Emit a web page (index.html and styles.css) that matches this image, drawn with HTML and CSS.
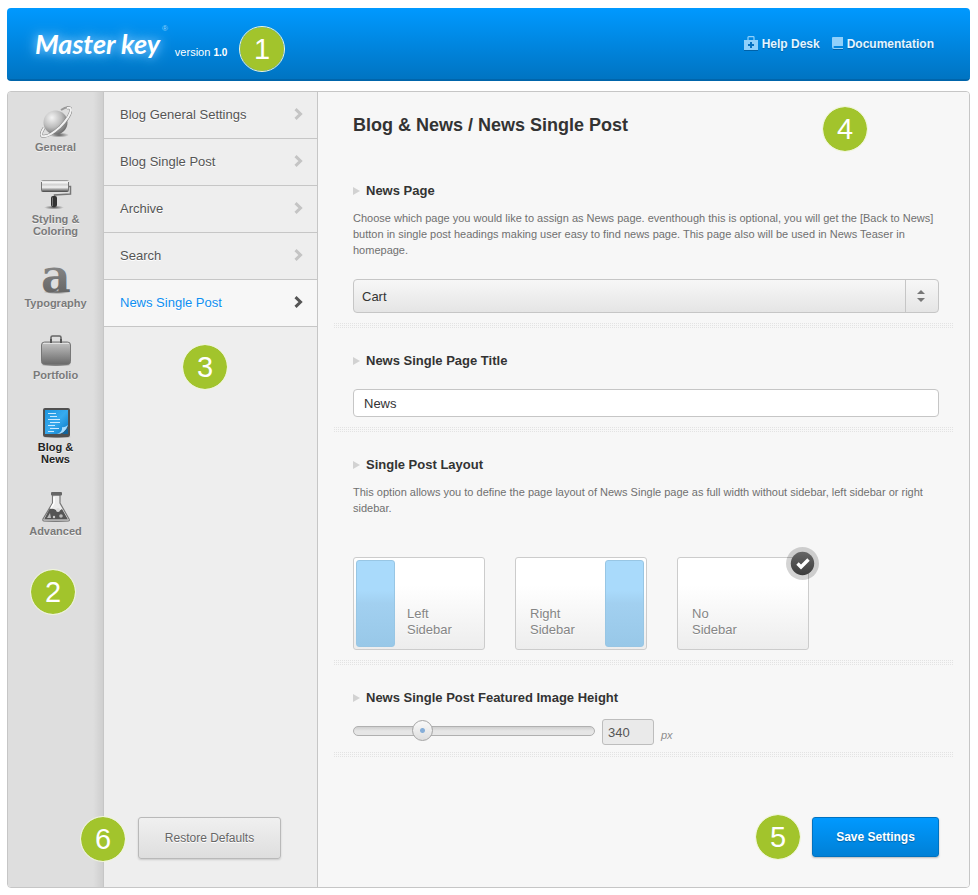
FILE: index.html
```html
<!DOCTYPE html>
<html lang="en">
<head>
<meta charset="utf-8">
<title>Master key – News Single Post</title>
<link rel="stylesheet" href="styles.css">
</head>
<body>
<header class="topbar">
  <span class="logo">Master key</span><sup class="reg">®</sup>
  <span class="version">version <b>1.0</b></span>
  <span class="callout callout-1">1</span>
  <nav class="links">
    <a href="#"><svg width="14" height="15" viewBox="0 0 14 15"><path d="M4 4V1.500Q4 .7 4.800 .7H9.200Q10 .7 10 1.500V4" fill="none" stroke="#8fd0fb" stroke-width="1.200"/><path d="M0 4h14v10H0z" fill="#8fd0fb"/><path d="M0 14h14v1H0z" fill="#0062a8"/><path d="M6 6h2v2h2v2H8v2H6v-2H4V8h2z" fill="#0671c0"/></svg>Help Desk</a>
    <a href="#"><svg width="11" height="13" viewBox="0 0 11 13"><path d="M1 0H11V9H2.500Q1.500 9 1.500 10T2.500 11H11V12H2Q0 12 0 10V1Q0 0 1 0z" fill="#8fd0fb"/><path d="M1 12h10v1H1z" fill="#0062a8"/></svg>Documentation</a>
  </nav>
</header>

<div class="panel">
  <nav class="rail">
    <a href="#"><svg width="32" height="32" viewBox="0 0 32 32">
      <defs>
        <radialGradient id="ball" cx=".35" cy=".3" r=".8"><stop offset="0" stop-color="#f4f4f4"/><stop offset=".5" stop-color="#bdbdbd"/><stop offset="1" stop-color="#5e5e5e"/></radialGradient>
        <linearGradient id="metal" x2="0" y2="1"><stop offset="0" stop-color="#c4c4c4"/><stop offset="1" stop-color="#696969"/></linearGradient>
        <radialGradient id="drop"><stop offset="0" stop-color="#000" stop-opacity=".6"/><stop offset="1" stop-color="#000" stop-opacity="0"/></radialGradient>
      </defs>
      <ellipse cx="19" cy="29" rx="10" ry="2.500" fill="url(#drop)"/>
      <path d="M21 4Q27 0 30 2" fill="none" stroke="#999" stroke-width="2"/>
      <circle cx="15.500" cy="16.500" r="12" fill="url(#ball)"/>
      <path d="M4 22Q0 28 2 30Q8 32 20 21Q30 11 31 4Q31 1 27 2" fill="none" stroke="#808080" stroke-width="3"/>
      <path d="M4 22Q0 28 2 30Q8 32 20 21Q30 11 31 4Q31 1 27 2" fill="none" stroke="#f1f1f1" stroke-width="2"/>
    </svg>General</a>
    <a href="#"><svg width="32" height="32" viewBox="0 0 32 32">
      <defs><linearGradient id="roll" x2="0" y2="1"><stop offset="0" stop-color="#777"/><stop offset=".15" stop-color="#fff"/><stop offset=".4" stop-color="#d0d0d0"/><stop offset=".6" stop-color="#f5f5f5"/><stop offset=".8" stop-color="#999"/><stop offset="1" stop-color="#444"/></linearGradient></defs>
      <ellipse cx="14" cy="29.500" rx="10" ry="2" fill="url(#drop)"/>
      <path d="M28 8.500H30.500V16L14.500 17V20" fill="none" stroke="#777" stroke-width="1.500"/>
      <rect x="1" y="2" width="28" height="12" rx="2" fill="url(#roll)"/>
      <path d="M1.500 4V12M28.500 4V12" stroke="#777"/>
      <rect x="11" y="18" width="6" height="11" rx="2" fill="#333"/><path d="M12.500 19.500V28" stroke="#777"/>
    </svg>Styling &amp;<br>Coloring</a>
    <a href="#"><svg class="type-icon" width="32" height="32" viewBox="0 0 32 32">
      <defs><linearGradient id="ink" x2="0" y2="1"><stop offset="0" stop-color="#999"/><stop offset="1" stop-color="#5a5a5a"/></linearGradient></defs>
      <ellipse cx="17" cy="30" rx="14" ry="2" fill="url(#drop)"/>
      <text x="1" y="30" class="type-glyph" fill="url(#ink)">a</text>
    </svg>Typography</a>
    <a href="#"><svg width="32" height="32" viewBox="0 0 32 32">
      <ellipse cx="16" cy="31" rx="16" ry="1.500" fill="url(#drop)"/>
      <path d="M11 8V3.500Q11 2 12.500 2H19.500Q21 2 21 3.500V8" fill="none" stroke="#666" stroke-width="1.600"/>
      <rect x="1.500" y="8" width="29" height="22.500" rx="3" fill="url(#metal)" stroke="#777"/>
      <path d="M3 9.500H29" stroke="#e0e0e0"/><path d="M11 5v4M21 5v4" stroke="#555" stroke-width="2"/>
    </svg>Portfolio</a>
    <a href="#" class="current"><svg width="32" height="32" viewBox="0 0 32 32">
      <defs><linearGradient id="page" x2="1" y2="1"><stop offset="0" stop-color="#1d96df"/><stop offset=".5" stop-color="#37aaee"/><stop offset="1" stop-color="#0878c4"/></linearGradient></defs>
      <ellipse cx="17" cy="31" rx="15" ry="1.500" fill="url(#drop)"/>
      <rect x="3" y="2" width="27" height="29" rx="2" fill="#505050"/>
      <path d="M5 4H28V20Q25 27 18 28H5z" fill="url(#page)"/>
      <path d="M28 19Q24 22 22 21Q23 26 17 28Q25 28 28 19" fill="#a7dcff"/><path d="M22 28L28 22V28z" fill="#10659f"/>
      <path d="M8 7.500h8M10 10.500h7M8 13.500h12M10 16.500h10M8 19.500h7M10 22.500h9M8 25.500h6" stroke="#cdeaff" stroke-width="1.200"/>
    </svg>Blog &amp;<br>News</a>
    <a href="#"><svg width="32" height="32" viewBox="0 0 32 32">
      <ellipse cx="16" cy="31" rx="15" ry="1.500" fill="url(#drop)"/>
      <path d="M12.500 5V13L3 29Q2.500 31 4 31H28Q30 31 29 29L20 13V5z" fill="#ececec" stroke="#777" stroke-width="1.200"/>
      <path d="M9.500 19L4 29.500H28L22 19Q19 22 16 20T9.500 19z" fill="#555"/>
      <path d="M10 23L7 28h4z" fill="#bbb"/><circle cx="18" cy="20" r="2" fill="#ddd"/><circle cx="21" cy="26" r="1.800" fill="#bbb"/><circle cx="14" cy="27" r="1.200" fill="#ccc"/>
      <rect x="11" y="2" width="11" height="3.500" rx="1" fill="#666"/><path d="M14 7V13L11 18" fill="none" stroke="#fff" stroke-width="1.500"/>
    </svg>Advanced</a>
    <span class="callout callout-2">2</span>
  </nav>

  <div class="subnav">
    <nav class="subnav-list">
      <a href="#">Blog General Settings<svg width="9" height="12" viewBox="0 0 9 12"><path d="M1.500 1.200L6.500 6L1.500 10.800"/></svg></a>
      <a href="#">Blog Single Post<svg width="9" height="12" viewBox="0 0 9 12"><path d="M1.500 1.200L6.500 6L1.500 10.800"/></svg></a>
      <a href="#">Archive<svg width="9" height="12" viewBox="0 0 9 12"><path d="M1.500 1.200L6.500 6L1.500 10.800"/></svg></a>
      <a href="#">Search<svg width="9" height="12" viewBox="0 0 9 12"><path d="M1.500 1.200L6.500 6L1.500 10.800"/></svg></a>
      <a href="#" class="current">News Single Post<svg width="9" height="12" viewBox="0 0 9 12"><path d="M1.500 1.200L6.500 6L1.500 10.800"/></svg></a>
    </nav>
    <button type="reset" form="settings" class="btn-restore">Restore Defaults</button>
    <span class="callout callout-3">3</span>
    <span class="callout callout-6">6</span>
  </div>

  <main class="main">
    <form id="settings" class="settings">
      <h1>Blog &amp; News / News Single Post</h1>

      <section class="option">
        <h2><label for="news-page">News Page</label></h2>
        <p>Choose which page you would like to assign as News page. eventhough this is optional, you will get the [Back to News] button in single post headings making user easy to find news page. This page also will be used in News Teaser in homepage.</p>
        <div class="select">
          <select id="news-page"><option>Cart</option></select>
          <span class="select-arrows"><svg width="8" height="12" viewBox="0 0 8 12"><path d="M4 0L8 4H0zM4 12L0 8H8z" fill="#777"/></svg></span>
        </div>
      </section>

      <section class="option">
        <h2><label for="page-title">News Single Page Title</label></h2>
        <input id="page-title" class="text" type="text" value="News">
      </section>

      <section class="option">
        <h2>Single Post Layout</h2>
        <p>This option allows you to define the page layout of News Single page as full width without sidebar, left sidebar or right sidebar.</p>
        <div class="cards">
          <label class="card"><input type="radio" name="layout"><span class="bar"></span><span class="name">Left<br>Sidebar</span></label>
          <label class="card card-right"><input type="radio" name="layout"><span class="name">Right<br>Sidebar</span><span class="bar"></span></label>
          <label class="card"><input type="radio" name="layout" checked><span class="name">No<br>Sidebar</span>
            <svg class="check" width="33" height="33" viewBox="0 0 33 33"><defs><linearGradient id="dark" x2="0" y2="1"><stop offset="0" stop-color="#666"/><stop offset="1" stop-color="#3c3c3c"/></linearGradient></defs><circle cx="16.500" cy="16.500" r="16.500" fill="#000" fill-opacity=".17"/><circle cx="16.500" cy="16.500" r="11.700" fill="url(#dark)"/><path d="M11.500 16.500L15 20L22.500 12.500" fill="none" stroke="#fff" stroke-width="3.400"/></svg></label>
        </div>
      </section>

      <section class="option option-range">
        <h2><label for="height">News Single Post Featured Image Height</label></h2>
        <div class="range">
          <input id="height" class="slider" type="range" min="100" max="1000" value="340">
          <input class="number" type="text" value="340" aria-label="Height in pixels">
          <span class="unit">px</span>
        </div>
      </section>

      <button type="submit" class="btn-save">Save Settings</button>
    </form>
    <span class="callout callout-4">4</span>
    <span class="callout callout-5">5</span>
  </main>
</div>
</body>
</html>
```
FILE: styles.css
```css
* { box-sizing: border-box; }

body {
  margin: 8px 8px 7px 7px;
  background: #fff;
  font-family: "Liberation Sans", Arial, sans-serif;
  font-size: 13px;
  color: #333;
}

a { text-decoration: none; }
h1, h2, p { margin: 0; }
input, select, button { font: inherit; margin: 0; }

/* Header */
.topbar {
  position: relative;
  display: flex;
  align-items: center;
  height: 73px;
  padding: 0 36px 0 28px;
  border-radius: 4px;
  border-bottom: 2px solid #0065ab;
  background: linear-gradient(#0099ff, #0074c2);
  color: #fff;
}
.logo {
  font-family: Lato, "Liberation Sans", sans-serif;
  font-style: italic;
  font-weight: bold;
  font-size: 27px;
  line-height: 40px;
  text-shadow: 0 0 14px #8fd0ff, 0 0 8px #4db2f7;
}
.reg { align-self: flex-start; margin: 16px 0 0 2px; font-size: 8px; color: #8fd0fb; }
.version { margin: 16px 0 0 7px; font-size: 11px; }
.version b { font-size: 10px; }
.links { display: flex; gap: 12px; margin-left: auto; }
.links a {
  display: flex;
  align-items: center;
  gap: 4px;
  color: #e4f4ff;
  font-weight: bold;
  font-size: 12px;
  text-shadow: 0 1px 1px #0063a8;
}

/* Numbered markers */
.callout {
  position: absolute;
  z-index: 2;
  width: 46px;
  height: 46px;
  border: 1px solid #f0f6d8;
  border-radius: 50%;
  background: #a2c42c;
  background-clip: padding-box;
  color: #fff;
  font-size: 29px;
  line-height: 44px;
  text-align: center;
}
.callout-1 { left: 232px; top: 18px; }
.callout-2 { left: 22px; top: 477px; }
.callout-3 { left: 78px; top: 252px; }
.callout-4 { right: 101px; top: 14px; }
.callout-5 { right: 168px; bottom: 27px; }
.callout-6 { left: -24px; bottom: 25px; }

/* Panel */
.panel {
  display: grid;
  grid-template-columns: 96px 214px 1fr;
  min-height: calc(100vh - 98px);
  margin-top: 10px;
  border: 1px solid #c6c6c6;
  border-radius: 4px;
  background: #f6f6f6;
}

.rail {
  position: relative;
  display: flex;
  flex-direction: column;
  gap: 25px;
  padding-top: 14px;
  border-right: 1px solid #c6c6c6;
  border-radius: 3px 0 0 3px;
  background: linear-gradient(to left, rgba(0, 0, 0, 0.07), rgba(0, 0, 0, 0) 10px), #dedede;
}
.rail a {
  display: flex;
  flex-direction: column;
  align-items: center;
  gap: 3px;
  color: #7a7a7a;
  font-weight: bold;
  font-size: 11px;
  line-height: 12px;
  text-align: center;
  text-shadow: 0 1px 0 #f4f4f4;
}
.rail a.current { color: #222; }
.type-icon { overflow: visible; }
.type-glyph { font: bold 46px "DejaVu Serif", serif; text-shadow: none; }

.subnav {
  position: relative;
  display: flex;
  flex-direction: column;
  justify-content: space-between;
  padding-bottom: 28px;
  border-right: 1px solid #c6c6c6;
  background: #eeeeee;
}
.subnav-list a {
  display: flex;
  align-items: center;
  justify-content: space-between;
  height: 47px;
  padding: 0 14px 2px 16px;
  border-bottom: 1px solid #c6c6c6;
  color: #555;
  text-shadow: 0 1px 0 #fff;
}
.subnav-list svg { fill: none; stroke: #c4c4c4; stroke-width: 3; }
.subnav-list a.current { background: #f7f7f7; color: #0d8ff2; }
.subnav-list a.current svg { stroke: #555; }

.btn-restore {
  height: 42px;
  margin: 0 36px 0 34px;
  border: 1px solid #b9b9b9;
  border-radius: 3px;
  background: linear-gradient(#f0f0f0, #dedede);
  box-shadow: 0 1px 2px rgba(0, 0, 0, 0.15);
  color: #666;
  font-size: 12px;
  text-shadow: 0 1px 0 #fff;
}

/* Options */
.main {
  position: relative;
  border-radius: 0 3px 3px 0;
  background: #f7f7f7;
}
.settings {
  display: flex;
  flex-direction: column;
  height: 100%;
  padding: 22px 15px 30px;
}
h1 {
  margin-bottom: 22px;
  padding-left: 20px;
  font-size: 18px;
  line-height: 22px;
}
.option {
  position: relative;
  padding: 23px 15px 15px 20px;
}
.option::after {
  content: "";
  position: absolute;
  inset: auto 0 0;
  height: 5px;
  background: conic-gradient(#e3e3e3 25%, transparent 0) 0 0 / 2px 2px;
}
.option h2 {
  display: flex;
  align-items: center;
  gap: 6px;
  margin-bottom: 18px;
  font-size: 13px;
  line-height: 20px;
}
.option h2::before {
  content: "";
  border: 4px solid transparent;
  border-left: 7px solid #d2d2d2;
  border-right: 0;
}
.option p {
  margin: -9px 0 21px;
  color: #707070;
  font-size: 11px;
  line-height: 16px;
}

.select { position: relative; }
.select select {
  display: block;
  width: 100%;
  height: 34px;
  padding: 0 42px 0 8px;
  appearance: none;
  border: 1px solid #c6c6c6;
  border-radius: 4px;
  background: linear-gradient(#f7f7f7, #e5e5e5);
  color: #333;
}
.select-arrows {
  position: absolute;
  inset: 1px 1px 1px auto;
  display: grid;
  place-items: center;
  width: 33px;
  padding-right: 2px;
  border-left: 1px solid #c6c6c6;
  pointer-events: none;
}
.text {
  display: block;
  width: 100%;
  height: 28px;
  padding: 0 10px;
  border: 1px solid #c6c6c6;
  border-radius: 4px;
  background: #fff;
  color: #333;
}

.cards { display: flex; gap: 30px; padding-top: 20px; }
.card {
  position: relative;
  display: flex;
  width: 132px;
  height: 93px;
  padding: 2px;
  border: 1px solid #cccccc;
  border-radius: 3px;
  background: linear-gradient(#fff 30%, #ededed);
}
.card input { position: absolute; opacity: 0; }
.bar {
  width: 39px;
  border: 1px solid #98c6e4;
  border-radius: 3px;
  background: linear-gradient(#a9dafb 35%, #a2d0f0 50%, #98c8e8);
}
.name {
  align-self: flex-end;
  padding: 0 12px 9px;
  color: #858585;
  line-height: 16px;
  text-shadow: 0 1px 0 #fff;
}
.card-right { justify-content: space-between; }
.check { position: absolute; right: -11px; top: -11px; }

.option-range { padding-bottom: 12px; }
.option-range h2 { margin-bottom: 11px; }
.range { display: flex; align-items: center; }
.slider {
  width: 242px;
  height: 22px;
  margin-right: 7px;
  margin-bottom: 2px;
  appearance: none;
  background: none;
}
.slider::-webkit-slider-runnable-track {
  height: 10px;
  border: 1px solid #b0b0b0;
  border-radius: 5px;
  background: linear-gradient(#cfcfcf, #e6e6e6 50%);
}
.slider::-webkit-slider-thumb {
  appearance: none;
  width: 21px;
  height: 21px;
  margin-top: -7px;
  border: 1px solid #a5a5a5;
  border-radius: 50%;
  background:
    radial-gradient(circle, #86aed8 0 2px, rgba(134, 174, 216, 0) 3px),
    linear-gradient(#fafafa, #dedede);
}
.number {
  width: 52px;
  height: 26px;
  padding: 0 5px;
  border: 1px solid #bdbdbd;
  border-radius: 3px;
  background: #eaeaea;
  color: #555;
}
.unit { margin: 5px 0 0 7px; color: #8c8c8c; font-size: 11px; font-style: italic; }

.btn-save {
  align-self: flex-end;
  width: 127px;
  height: 40px;
  margin: auto 15px 0 0;
  border: 1px solid #0072c0;
  border-radius: 3px;
  background: linear-gradient(#0099ff, #0080d6);
  box-shadow: 0 1px 2px rgba(0, 0, 0, 0.25);
  color: #fff;
  font-weight: bold;
  font-size: 12px;
  text-shadow: 0 1px 1px #0063a8;
}
```
